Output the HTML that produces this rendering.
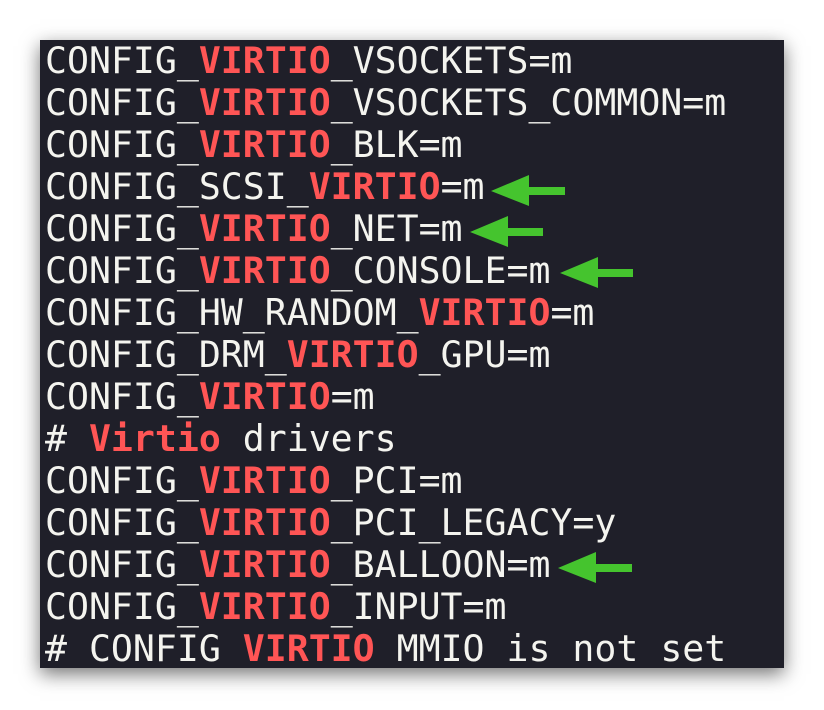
<!DOCTYPE html>
<html><head><style>
html,body{margin:0;padding:0;background:#fff;width:824px;height:710px;overflow:hidden}
.box{position:absolute;left:40px;top:40px;width:744px;height:628px;background:#1f1f29;box-shadow:0 6px 18px rgba(0,0,0,.55);overflow:hidden}
pre{margin:0;padding:0 0 0 5px;font-family:"DejaVu Sans Mono","Liberation Mono",monospace;font-size:36.5px;line-height:42px;color:#f4f4ef;white-space:pre}
b{color:#ff5555;font-weight:bold}
svg{position:absolute;left:0;top:0}
</style></head><body>
<div class="box"><pre>CONFIG_<b>VIRTIO</b>_VSOCKETS=m
CONFIG_<b>VIRTIO</b>_VSOCKETS_COMMON=m
CONFIG_<b>VIRTIO</b>_BLK=m
CONFIG_SCSI_<b>VIRTIO</b>=m
CONFIG_<b>VIRTIO</b>_NET=m
CONFIG_<b>VIRTIO</b>_CONSOLE=m
CONFIG_HW_RANDOM_<b>VIRTIO</b>=m
CONFIG_DRM_<b>VIRTIO</b>_GPU=m
CONFIG_<b>VIRTIO</b>=m
# <b>Virtio</b> drivers
CONFIG_<b>VIRTIO</b>_PCI=m
CONFIG_<b>VIRTIO</b>_PCI_LEGACY=y
CONFIG_<b>VIRTIO</b>_BALLOON=m
CONFIG_<b>VIRTIO</b>_INPUT=m
# CONFIG_<b>VIRTIO</b>_MMIO is not set</pre></div>
<svg width="824" height="710">
<g fill="#45c42e">
<path d="M491 191 L529 175 L529 187 L565 187 L565 195 L529 195 L529 206 Z"/>
<path d="M470 232 L508 216 L508 228 L543 228 L543 236 L508 236 L508 247 Z"/>
<path d="M560 273 L598 257 L598 269 L633 269 L633 277 L598 277 L598 288 Z"/>
<path d="M558 568 L596 552 L596 564 L632 564 L632 572 L596 572 L596 583 Z"/>
</g></svg>
</body></html>
